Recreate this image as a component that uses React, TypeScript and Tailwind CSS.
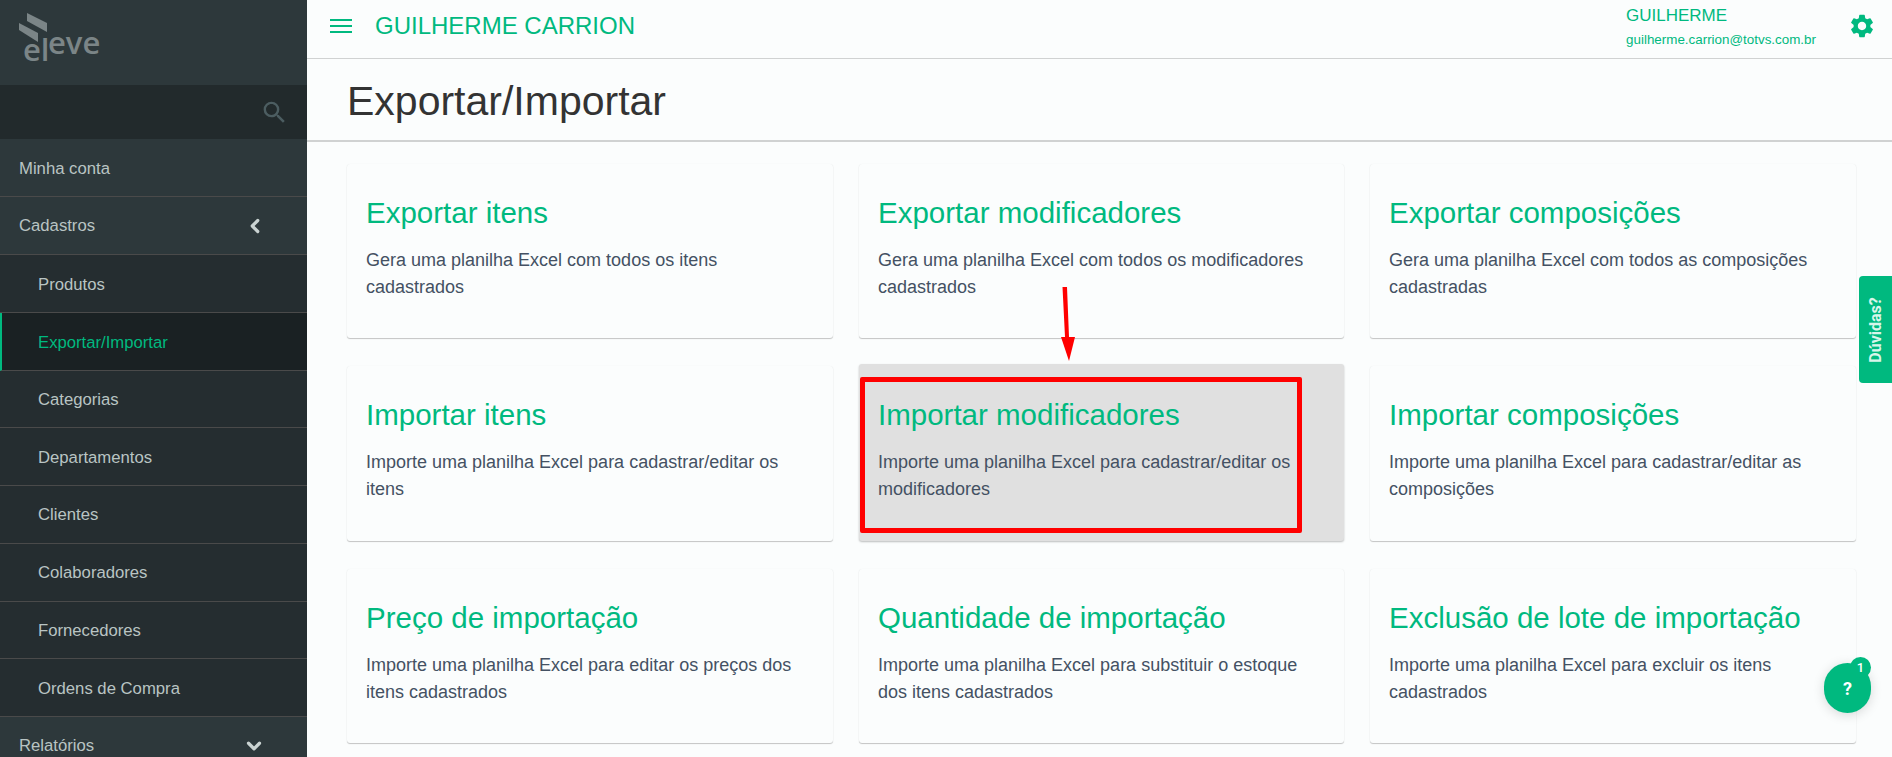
import { ChevronDown, ChevronLeft } from "lucide-react"
import { MdSearch, MdSettings } from "react-icons/md"

const subItems = ["Produtos", "Exportar/Importar", "Categorias", "Departamentos", "Clientes", "Colaboradores", "Fornecedores", "Ordens de Compra"]

const cards = [
  { title: "Exportar itens", text: "Gera uma planilha Excel com todos os itens cadastrados" },
  { title: "Exportar modificadores", text: "Gera uma planilha Excel com todos os modificadores cadastrados" },
  { title: "Exportar composições", text: "Gera uma planilha Excel com todos as composições cadastradas" },
  { title: "Importar itens", text: "Importe uma planilha Excel para cadastrar/editar os itens" },
  { title: "Importar modificadores", text: "Importe uma planilha Excel para cadastrar/editar os modificadores", highlighted: true },
  { title: "Importar composições", text: "Importe uma planilha Excel para cadastrar/editar as composições" },
  { title: "Preço de importação", text: "Importe uma planilha Excel para editar os preços dos itens cadastrados" },
  { title: "Quantidade de importação", text: "Importe uma planilha Excel para substituir o estoque dos itens cadastrados" },
  { title: "Exclusão de lote de importação", text: "Importe uma planilha Excel para excluir os itens cadastrados" },
]

function Logo() {
  return (
    <div className="relative w-[82px] h-[52px]">
      <svg viewBox="0 0 30 30" className="absolute left-0 top-0 w-[30px] h-[30px]" fill="#7b8587">
        <polygon points="8,0 28,10 28,19 8,8" />
        <polygon points="0,10 19,20 19,29 0,17" />
      </svg>
      <span className="absolute left-[4px] top-[21px] text-[31px] leading-[30px] font-['Open_Sans',sans-serif] font-semibold text-[#7b8587]">el</span>
      <span className="absolute left-[29px] top-[14px] text-[31px] leading-[30px] font-['Open_Sans',sans-serif] font-semibold text-[#7b8587]">eve</span>
    </div>
  )
}

function Sidebar() {
  return (
    <aside className="w-[307px] h-[757px] shrink-0 overflow-hidden bg-[#2d383b] text-[16.7px] text-[#b9c4c3]">
      <div className="h-[85px] pl-[19px] pt-[13px]">
        <Logo />
      </div>
      <div className="h-[54px] bg-[#222a2c] flex items-center justify-end pr-[18px]">
        <MdSearch className="w-[29px] h-[29px] text-[#4c5d61]" />
      </div>
      <div className="h-[57.7px] flex items-center pl-[19px] pt-[2px] border-b border-[#4a4a4a]">Minha conta</div>
      <div className="h-[58.7px] flex items-center justify-between pl-[19px] pr-[41px] border-b border-[#4a4a4a]">
        Cadastros
        <ChevronLeft className="w-[22px] h-[22px] text-[#c9d2d1]" strokeWidth={3.5} />
      </div>
      {subItems.map((item) => {
        const active = item === "Exportar/Importar"
        return (
          <div
            key={item}
            className={
              active
                ? "h-[57.7px] flex items-center pl-[36px] pt-[2px] border-b border-l-2 border-b-[#4a4a4a] border-l-[#00b97f] bg-[#1a2123] text-[#00b97f]"
                : "h-[57.7px] flex items-center pl-[38px] pt-[1px] border-b border-[#4a4a4a] bg-[#252d30]"
            }
          >
            {item}
          </div>
        )
      })}
      <div className="h-[57.7px] flex items-center justify-between pl-[19px] pr-[42px]">
        Relatórios
        <ChevronDown className="w-[22px] h-[22px] text-[#c9d2d1]" strokeWidth={3.5} />
      </div>
    </aside>
  )
}

function Header() {
  return (
    <header className="h-[59px] shrink-0 flex items-center pb-[7px] border-b border-[#d0d2d2] text-[#00b97f]">
      <div className="ml-[23px] w-[22px] flex flex-col gap-[4px]">
        <div className="h-[2px] bg-[#00b97f]" />
        <div className="h-[2px] bg-[#00b97f]" />
        <div className="h-[2px] bg-[#00b97f]" />
      </div>
      <div className="ml-[23px] text-[24px]">GUILHERME CARRION</div>
      <div className="ml-auto mr-[32px]">
        <div className="text-[17px] leading-[22px] mt-[3px]">GUILHERME</div>
        <div className="text-[13.4px] leading-[18px] mt-[4px]">guilherme.carrion@totvs.com.br</div>
      </div>
      <MdSettings className="mr-[16px] w-[28px] h-[28px]" />
    </header>
  )
}

function Card({ title, text, highlighted }: { title: string; text: string; highlighted?: boolean }) {
  return (
    <div
      className={
        highlighted
          ? "relative -mt-[2px] h-[176.5px] rounded-[3px] bg-[#e0e0e0] shadow-[0_1px_2px_rgba(0,0,0,0.25)] pl-[19px] pr-[20px] pt-[32px]"
          : "relative h-[174.5px] rounded-[3px] bg-[#fbfdfd] shadow-[0_1px_1px_rgba(0,0,0,0.22),0_0_1px_rgba(0,0,0,0.08)] pl-[19px] pr-[20px] pt-[30px]"
      }
    >
      <h2 className="text-[29.5px] leading-[38px] text-[#00b97f]">{title}</h2>
      <p className="mt-[15px] text-[18px] leading-[27px] text-[#445163]">{text}</p>
      {highlighted && (
        <>
          <div className="absolute left-[1px] top-[13px] w-[442px] h-[156px] border-[5px] border-[#ff0000] rounded-[2px]" />
          <svg className="absolute left-[195px] top-[-77px] w-[22px] h-[75px]" viewBox="0 0 22 75" fill="#ff0000">
            <polygon points="8.5,0 13,0 15,50 21,50 15,74 7,50 11,50" />
          </svg>
        </>
      )}
    </div>
  )
}

export default function App() {
  return (
    <div className="relative flex w-[1892px] h-[757px] overflow-hidden bg-[#fbfdfd] font-['Liberation_Sans',Arial,sans-serif]">
      <Sidebar />
      <main className="flex-1 flex flex-col min-w-0">
        <Header />
        <div className="h-[83px] shrink-0 flex items-center pl-[40px] pt-[5px] border-b-2 border-[#d0d2d2] text-[41px] text-[#333333]">
          Exportar/Importar
        </div>
        <div className="grid grid-cols-[486px_485px_486px] gap-x-[26px] gap-y-[28px] pl-[40px] pt-[21.5px]">
          {cards.map((card) => (
            <Card key={card.title} {...card} />
          ))}
        </div>
      </main>
      <div className="absolute right-0 top-[276px] w-[33px] h-[107px] rounded-l-[4px] bg-[#00b97f] flex items-center justify-center">
        <span className="-rotate-90 whitespace-nowrap text-[16px] font-bold text-[#d8f5ea] font-['Roboto',sans-serif]">Dúvidas?</span>
      </div>
      <div className="absolute left-[1824px] top-[663px] w-[47px] h-[50px] rounded-full bg-[#00b97f] shadow-[0_2px_12px_rgba(0,0,0,0.15)] flex items-center justify-center text-[18px] font-bold text-white font-['Roboto',sans-serif]">
        ?
      </div>
      <div className="absolute left-[1850px] top-[657px] w-[21px] h-[21px] rounded-full bg-[#00b97f] flex items-center justify-center text-[13px] font-medium text-white font-['Roboto',sans-serif]">
        1
      </div>
    </div>
  )
}
